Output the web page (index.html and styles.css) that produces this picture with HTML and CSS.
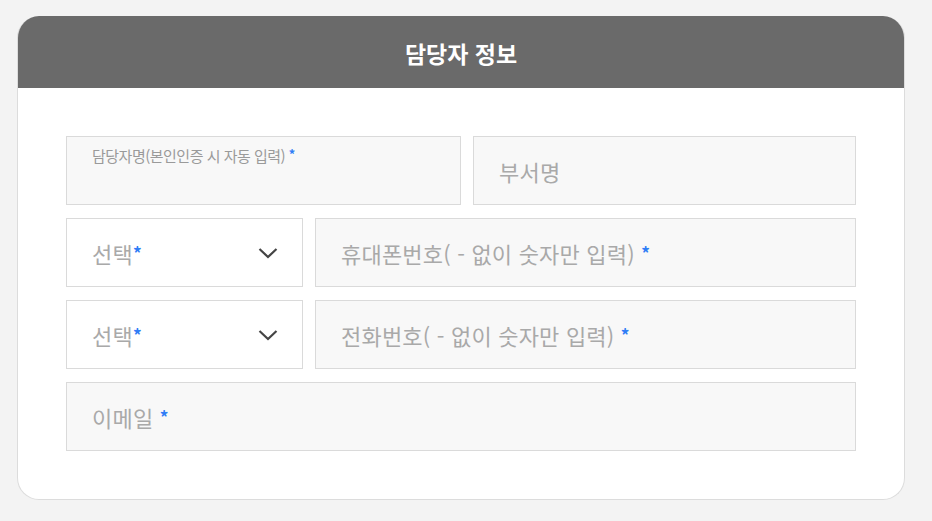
FILE: index.html
```html
<!DOCTYPE html>
<html lang="ko">
<head>
<meta charset="utf-8">
<title>담당자 정보</title>
<link rel="stylesheet" href="styles.css">
</head>
<body>
<div class="page">
  <section class="card">
    <header class="card-head">담당자 정보</header>
    <div class="card-body">
      <div class="row row-a">
        <div class="field field-labeled">
          <span class="label">담당자명(본인인증 시 자동 입력) <span class="req">*</span></span>
        </div>
        <div class="field"><span class="ph">부서명</span></div>
      </div>
      <div class="row row-b">
        <div class="field select">
          <span class="ph">선택<span class="req">*</span></span>
          <svg class="chev" width="20" height="12" viewBox="0 0 20 12"><path d="M1.5 2 L10 10 L18.5 2" fill="none" stroke="#444" stroke-width="2.2"/></svg>
        </div>
        <div class="field"><span class="ph">휴대폰번호( - 없이 숫자만 입력) <span class="req">*</span></span></div>
      </div>
      <div class="row row-b">
        <div class="field select">
          <span class="ph">선택<span class="req">*</span></span>
          <svg class="chev" width="20" height="12" viewBox="0 0 20 12"><path d="M1.5 2 L10 10 L18.5 2" fill="none" stroke="#444" stroke-width="2.2"/></svg>
        </div>
        <div class="field"><span class="ph">전화번호( - 없이 숫자만 입력) <span class="req">*</span></span></div>
      </div>
      <div class="row">
        <div class="field"><span class="ph">이메일 <span class="req">*</span></span></div>
      </div>
    </div>
  </section>
</div>
</body>
</html>
```

FILE: styles.css
```css
* { box-sizing: border-box; }
html, body { margin: 0; padding: 0; }
body {
  background: #f3f3f3;
  font-family: "Noto Sans CJK KR", "Noto Sans", sans-serif;
  width: 932px;
  height: 521px;
  overflow: hidden;
}
.page {
  padding: 16px 27px 0 17px;
}
.card {
  width: 888px;
  background: #fff;
  border: 1px solid #dcdcdc;
  border-top: none;
  border-radius: 22px;
  overflow: hidden;
}
.card-head {
  height: 72px;
  background: #6a6a6a;
  color: #fff;
  font-size: 23px;
  font-weight: 700;
  display: flex;
  align-items: center;
  justify-content: center;
  padding-top: 1px;
}
.card-body {
  padding: 48px;
  display: flex;
  flex-direction: column;
  gap: 13px;
}
.row {
  display: flex;
  gap: 12px;
}
.field {
  flex: 1;
  height: 69px;
  border: 1px solid #dadada;
  background: #f8f8f8;
  display: flex;
  align-items: center;
  padding-left: 25px;
  padding-right: 22px;
}
.row-a .field:first-child { flex: 0 0 395px; }
.row-b .select { flex: 0 0 237px; }
.field.select {
  background: #fff;
  justify-content: space-between;
}
.field-labeled {
  align-items: flex-start;
  padding-top: 7px;
}
.label {
  font-size: 15px;
  color: #9a9a9a;
  letter-spacing: -0.5px;
}
.ph {
  font-size: 22px;
  color: #a9a9a9;
  letter-spacing: 0.2px;
}
.req {
  color: #2f7df6;
  font-weight: 700;
  font-size: 0.78em;
  vertical-align: 0.2em;
}
.label .req { font-size: 0.85em; }
.chev { display: block; margin-right: 2px; }
```
